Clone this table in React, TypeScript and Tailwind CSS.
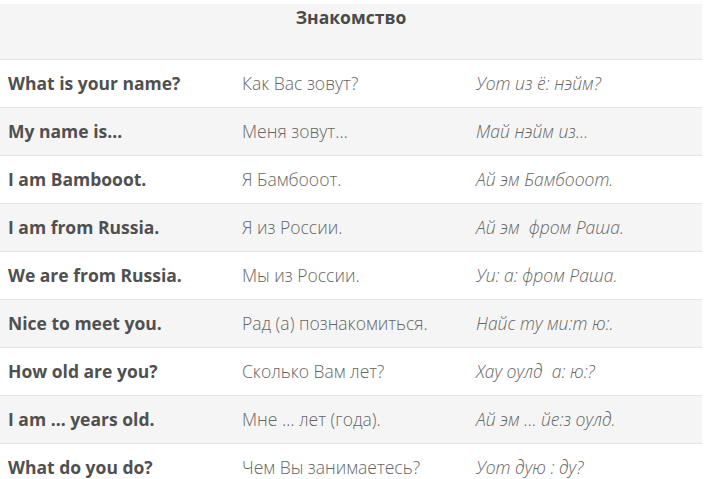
const rows = [
  ["What is your name?", "Как Вас зовут?", "Уот из ё: нэйм?"],
  ["My name is…", "Меня зовут…", "Май нэйм из…"],
  ["I am Bambooot.", "Я Бамбооот.", "Ай эм Бамбооот."],
  ["I am from Russia.", "Я из России.", "Ай эм  фром Раша."],
  ["We are from Russia.", "Мы из России.", "Уи: а: фром Раша."],
  ["Nice to meet you.", "Рад (а) познакомиться.", "Найс ту ми:т ю:."],
  ["How old are you?", "Сколько Вам лет?", "Хау оулд  а: ю:?"],
  ["I am … years old.", "Мне … лет (года).", "Ай эм … йе:з оулд."],
  ["What do you do?", "Чем Вы занимаетесь?", "Уот дую : ду?"],
];

export default function App() {
  return (
    <div className="w-[704px] h-[479px] overflow-hidden bg-white pt-[4px] font-['Open_Sans',sans-serif]">
      <div className="w-[702px]">
        <div className="h-[55px] bg-[#f5f5f5] text-center">
          <span className="text-[17.5px] leading-[26px] font-bold text-[#4a4a4a]">Знакомство</span>
        </div>
        {rows.map((r, i) => (
          <div
            key={i}
            className={`grid grid-cols-[234px_234px_234px] h-[48px] items-center border-t border-[#e6e6e6] ${
              i % 2 === 1 ? "bg-[#f5f5f5]" : "bg-white"
            }`}
          >
            <div className="px-2 text-[17.5px] font-bold text-[#505050]">{r[0]}</div>
            <div className="px-2 text-[17.5px] font-light text-[#666]">{r[1]}</div>
            <div className="px-2 text-[17.5px] font-light italic text-[#666] whitespace-pre">{r[2]}</div>
          </div>
        ))}
      </div>
    </div>
  );
}
